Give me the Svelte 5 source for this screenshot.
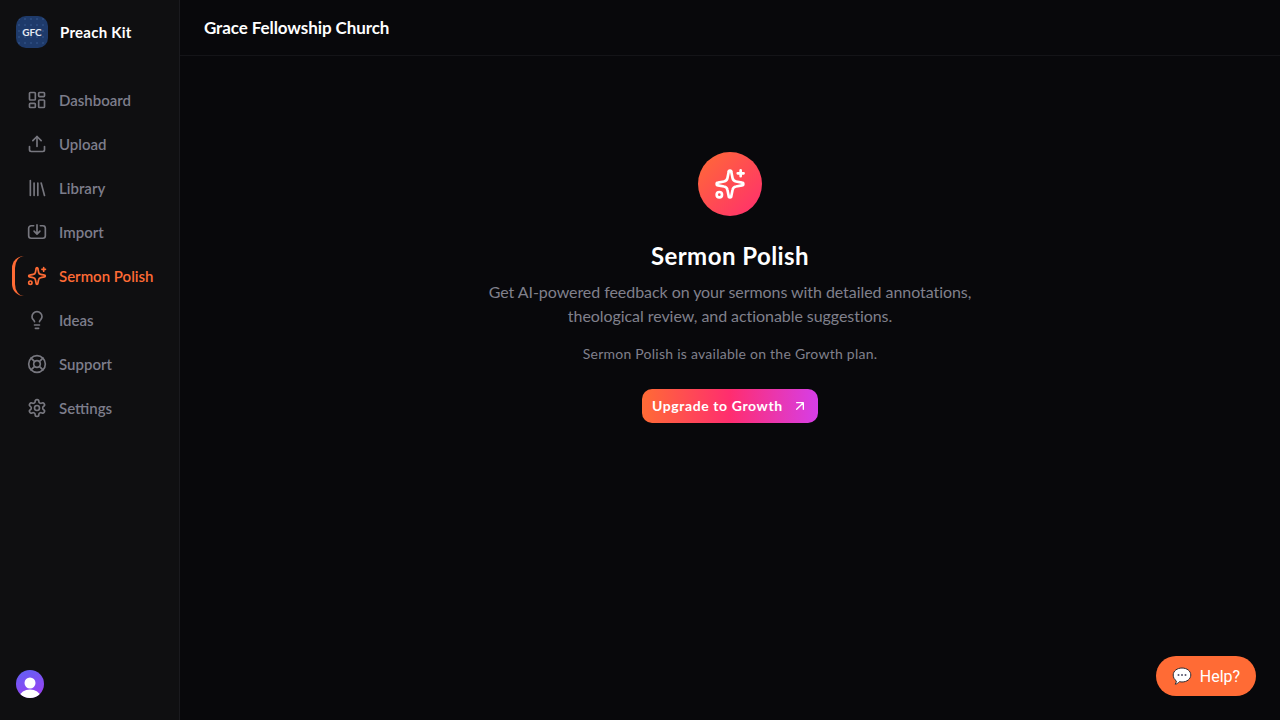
<script lang="ts">
    const nav = [
        { label: 'Dashboard', icon: 'dashboard' },
        { label: 'Upload', icon: 'upload' },
        { label: 'Library', icon: 'library' },
        { label: 'Import', icon: 'import' },
        { label: 'Sermon Polish', icon: 'sparkles', active: true },
        { label: 'Ideas', icon: 'bulb' },
        { label: 'Support', icon: 'support' },
        { label: 'Settings', icon: 'settings' }
    ];
</script>

{#snippet sparkles()}
    <path d="M11 3a1 1 0 0 1 2 0l.9 4.500a3.200 3.200 0 0 0 2.600 2.600l4.500.9a1 1 0 0 1 0 2l-4.500.9a3.200 3.200 0 0 0-2.600 2.600l-.9 4.500a1 1 0 0 1-2 0l-.9-4.500a3.200 3.200 0 0 0-2.600-2.600l-4.500-.9a1 1 0 0 1 0-2l4.500-.9a3.200 3.200 0 0 0 2.600-2.600z" />
    <path d="M20 1.800v4.400M17.800 4h4.400" />
    <circle cx="4" cy="20" r="2" />
{/snippet}

<div class="shell">
    <aside class="sidebar">
        <div class="brand">
            <div class="logo">GFC</div>
            <span>Preach Kit</span>
        </div>
        <nav>
            {#each nav as item}
                <div class="item" class:active={item.active}>
                    <svg class="icon" viewBox="0 0 24 24" fill="none" stroke="currentColor" stroke-width="2" stroke-linecap="round" stroke-linejoin="round">
                        {#if item.icon === 'dashboard'}
                            <rect x="3" y="3" width="7" height="9" rx="1" />
                            <rect x="14" y="3" width="7" height="5" rx="1" />
                            <rect x="14" y="12" width="7" height="9" rx="1" />
                            <rect x="3" y="16" width="7" height="5" rx="1" />
                        {:else if item.icon === 'upload'}
                            <path d="M21 15v4a2 2 0 0 1-2 2H5a2 2 0 0 1-2-2v-4" />
                            <path d="M17 8l-5-5-5 5" />
                            <path d="M12 3v12" />
                        {:else if item.icon === 'library'}
                            <path d="M4 3v18M8.500 6v15M13 6v15M17 6l4 15" />
                        {:else if item.icon === 'import'}
                            <path d="M8 4.500H5a3 3 0 0 0-3 3v9a3 3 0 0 0 3 3h14a3 3 0 0 0 3-3v-9a3 3 0 0 0-3-3h-3" />
                            <path d="M12 3.500v11M8.500 11l3.500 3.500 3.500-3.500" />
                        {:else if item.icon === 'sparkles'}
                            {@render sparkles()}
                        {:else if item.icon === 'bulb'}
                            <path d="M15 14c.2-1 .7-1.700 1.500-2.500A5.800 5.800 0 0 0 18 8 6 6 0 0 0 6 8c0 1 .2 2.200 1.500 3.500.7.700 1.300 1.500 1.500 2.500" />
                            <path d="M9 18h6M10 22h4" />
                        {:else if item.icon === 'support'}
                            <circle cx="12" cy="12" r="10" />
                            <circle cx="12" cy="12" r="4" />
                            <path d="M4.930 4.930l4.240 4.240M14.830 9.170l4.240-4.240M14.830 14.830l4.240 4.240M9.170 14.830l-4.240 4.240" />
                        {:else}
                            <path d="M12.220 2h-.44a2 2 0 0 0-2 2v.18a2 2 0 0 1-1 1.730l-.43.25a2 2 0 0 1-2 0l-.15-.08a2 2 0 0 0-2.730.73l-.22.38a2 2 0 0 0 .73 2.730l.15.1a2 2 0 0 1 1 1.720v.51a2 2 0 0 1-1 1.740l-.15.09a2 2 0 0 0-.73 2.730l.22.38a2 2 0 0 0 2.730.73l.15-.08a2 2 0 0 1 2 0l.43.25a2 2 0 0 1 1 1.730V20a2 2 0 0 0 2 2h.44a2 2 0 0 0 2-2v-.18a2 2 0 0 1 1-1.730l.43-.25a2 2 0 0 1 2 0l.15.08a2 2 0 0 0 2.730-.73l.22-.39a2 2 0 0 0-.73-2.730l-.15-.08a2 2 0 0 1-1-1.740v-.5a2 2 0 0 1 1-1.740l.15-.09a2 2 0 0 0 .73-2.730l-.22-.38a2 2 0 0 0-2.730-.73l-.15.08a2 2 0 0 1-2 0l-.43-.25a2 2 0 0 1-1-1.730V4a2 2 0 0 0-2-2z" />
                            <circle cx="12" cy="12" r="3" />
                        {/if}
                    </svg>
                    <span>{item.label}</span>
                </div>
            {/each}
        </nav>
        <div class="avatar">
            <svg viewBox="0 0 28 28" width="28" height="28">
                <circle cx="14" cy="13" r="5.500" fill="#fff" />
                <ellipse cx="14" cy="26" rx="10" ry="6.500" fill="#fff" />
            </svg>
        </div>
    </aside>

    <div class="main">
        <header>Grace Fellowship Church</header>
        <section class="content">
            <div class="badge">
                <svg viewBox="0 0 24 24" width="32" height="32" fill="none" stroke="#fff" stroke-width="2" stroke-linecap="round" stroke-linejoin="round">
                    {@render sparkles()}
                </svg>
            </div>
            <h1>Sermon Polish</h1>
            <p class="lead">Get AI-powered feedback on your sermons with detailed annotations,<br />theological review, and actionable suggestions.</p>
            <p class="note">Sermon Polish is available on the Growth plan.</p>
            <button class="upgrade">
                <span>Upgrade to Growth</span>
                <svg viewBox="0 0 24 24" width="16" height="16" fill="none" stroke="#fff" stroke-width="2" stroke-linecap="round" stroke-linejoin="round">
                    <path d="M7 7h10v10M7 17L17 7" />
                </svg>
            </button>
        </section>
    </div>
</div>

<button class="help">
    <svg viewBox="0 0 20 20" width="20" height="20">
        <path d="M10 2c4.900 0 8.800 3 8.800 7s-3.900 7-8.800 7c-.9 0-1.800-.1-2.600-.3C6.200 17 4.700 18 3.200 18.200c.7-.8 1.100-1.900 1.100-3.300C2.400 13.600 1.200 11.500 1.200 9c0-4 3.900-7 8.800-7z" fill="#fff" stroke="#2b2b33" stroke-width="1" />
        <circle cx="6.500" cy="9" r="1" fill="#55556a" />
        <circle cx="10" cy="9" r="1" fill="#55556a" />
        <circle cx="13.500" cy="9" r="1" fill="#55556a" />
    </svg>
    <span>Help?</span>
</button>

<style>
    :global(body) {
        background: #08080b;
        font-family: Lato, "Noto Sans", sans-serif;
    }

    .shell {
        display: flex;
        height: 720px;
        overflow: hidden;
    }

    .sidebar {
        width: 180px;
        box-sizing: border-box;
        flex-shrink: 0;
        display: flex;
        flex-direction: column;
        background: #0f0f11;
        border-right: 1px solid #1a1a1e;
    }

    .brand {
        display: flex;
        align-items: center;
        gap: 12px;
        padding: 16px 16px 0;
        color: #fff;
        font-size: 15px;
        font-weight: 700;
        letter-spacing: 0.25px;
    }

    .logo {
        width: 32px;
        height: 32px;
        border-radius: 10px;
        background-color: #1e3a6a;
        background-image: radial-gradient(#2b4a7e 0.7px, transparent 0.8px);
        background-size: 6px 6px;
        color: #e6ebf3;
        font-size: 10px;
        font-weight: 700;
        letter-spacing: 0;
        display: flex;
        align-items: center;
        justify-content: center;
    }

    nav {
        display: flex;
        flex-direction: column;
        gap: 4px;
        padding: 32px 12px 0;
        flex: 1;
    }

    .item {
        height: 40px;
        display: flex;
        align-items: center;
        gap: 12px;
        padding-left: 15px;
        color: #7d7d8b;
        font-size: 15px;
        font-weight: 600;
        border-radius: 12px;
    }

    .item span {
        padding-bottom: 1px;
    }

    .item.active {
        color: #ff6b35;
        border-left: 3px solid #ff6b35;
        padding-left: 12px;
    }

    .icon {
        width: 20px;
        height: 20px;
        flex-shrink: 0;
        color: #77777f;
    }

    .active .icon {
        color: #ff6b35;
    }

    .avatar {
        width: 28px;
        height: 28px;
        border-radius: 50%;
        overflow: hidden;
        margin: 0 0 22px 16px;
        background: linear-gradient(160deg, #5f62f6, #a23df0);
    }

    .avatar svg {
        display: block;
    }

    .main {
        flex: 1;
        display: flex;
        flex-direction: column;
    }

    header {
        height: 56px;
        box-sizing: border-box;
        padding: 0 24px;
        display: flex;
        align-items: center;
        color: #fff;
        font-size: 17px;
        font-weight: 700;
        letter-spacing: -0.09px;
        border-bottom: 1px solid #141418;
    }

    .content {
        display: flex;
        flex-direction: column;
        align-items: center;
        padding-top: 96px;
    }

    .badge {
        width: 64px;
        height: 64px;
        border-radius: 50%;
        background: linear-gradient(135deg, #ff6b35, #ff2d6f);
        display: flex;
        align-items: center;
        justify-content: center;
    }

    h1 {
        margin: 24px 0 0;
        color: #fff;
        font-size: 24px;
        line-height: 32px;
        font-weight: 700;
        letter-spacing: 0.45px;
    }

    .lead {
        margin: 8px 0 0;
        color: #80808c;
        font-size: 16px;
        line-height: 24px;
        text-align: center;
        letter-spacing: -0.06px;
    }

    .note {
        margin: 16px 0 0;
        color: #80808c;
        font-size: 14px;
        line-height: 20px;
        letter-spacing: 0.25px;
    }

    .upgrade {
        margin-top: 25px;
        width: 176px;
        height: 34px;
        border: 0;
        border-radius: 10px;
        padding: 0 10px;
        display: flex;
        align-items: center;
        justify-content: space-between;
        color: #fff;
        font: 700 14px Lato, sans-serif;
        letter-spacing: 0.6px;
        background: linear-gradient(90deg, #ff6b35, #ff2d6f 50%, #d63ee8);
    }

    .upgrade span {
        padding-bottom: 2px;
    }

    .help {
        position: fixed;
        right: 24px;
        bottom: 24px;
        width: 100px;
        height: 40px;
        border: 0;
        border-radius: 20px;
        background: #ff6b35;
        color: #fff;
        font: 400 16px Roboto, sans-serif;
        display: flex;
        align-items: center;
        justify-content: center;
        gap: 8px;
        padding: 0;
    }
</style>
